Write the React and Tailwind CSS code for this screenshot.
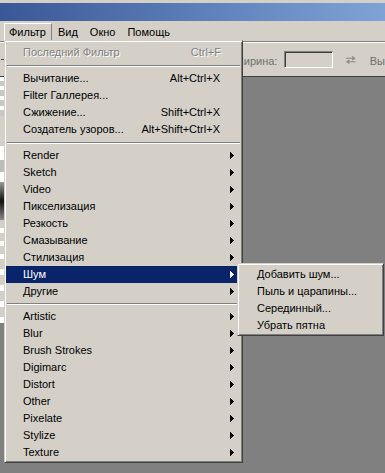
import React from 'react';

const topItems = [
  { label: 'Вычитание...', keys: 'Alt+Ctrl+X' },
  { label: 'Filter Галлерея...' },
  { label: 'Сжижение...', keys: 'Shift+Ctrl+X' },
  { label: 'Создатель узоров...', keys: 'Alt+Shift+Ctrl+X' },
];

const pluginItems = ['Render', 'Sketch', 'Video', 'Пикселизация', 'Резкость', 'Смазывание', 'Стилизация', 'Шум', 'Другие'];
const galleryItems = ['Artistic', 'Blur', 'Brush Strokes', 'Digimarc', 'Distort', 'Other', 'Pixelate', 'Stylize', 'Texture'];
const noiseItems = ['Добавить шум...', 'Пыль и царапины...', 'Серединный...', 'Убрать пятна'];

const Arrow = ({ white }) => (
  <svg width="4" height="7" viewBox="0 0 4 7" className="ml-auto mr-[7px]" shapeRendering="crispEdges">
    <path d="M0 0h1v1h1v1h1v1h1v1h-1v1h-1v1h-1v1h-1z" fill={white ? '#fff' : '#000'} />
  </svg>
);

const Separator = ({ h }) => (
  <div className={`flex items-center ${h}`}>
    <div className="mx-[1px] h-[2px] w-full border-t border-t-[#808080] border-b border-b-white" />
  </div>
);

const Row = ({ label, keys, sub, active }) => (
  <div className={`flex h-[17px] items-center pl-[17px] ${active ? 'bg-[#0a246a] text-white' : ''}`}>
    <span className="whitespace-nowrap">{label}</span>
    {keys && <span className="ml-auto mr-[21px] whitespace-nowrap">{keys}</span>}
    {sub && <Arrow white={active} />}
  </div>
);

const panel =
  'absolute border border-t-[#d4d0c8] border-l-[#d4d0c8] border-r-[#404040] border-b-[#404040] bg-[#d4d0c8] shadow-[inset_1px_1px_0_#fff,inset_-1px_-1px_0_#808080]';

export default function App() {
  return (
    <div className="relative flex h-[473px] w-[385px] flex-col overflow-hidden bg-[#808080] font-['Liberation_Sans',Arial,sans-serif] text-[11px] leading-none text-black select-none">
      {/* window title */}
      <div className="h-[3px] shrink-0 bg-[#d4d0c8]" />
      <div className="h-[18px] shrink-0 bg-[#3a5796] bg-[linear-gradient(to_right,#3a5796,#7fa3d7)]" />

      {/* menu bar */}
      <div className="flex h-[21px] shrink-0 items-start border-b border-b-[#808080] bg-[#d4d0c8] pl-[4px] pt-[2px]">
        <div className="flex h-[18px] items-center border-t border-l border-r border-t-white border-l-white border-r-[#808080] pl-[4px] pr-[5px]">
          Фильтр
        </div>
        <div className="flex h-[18px] items-center px-[6px]">Вид</div>
        <div className="flex h-[18px] items-center px-[6px]">Окно</div>
        <div className="flex h-[18px] items-center px-[6px]">Помощь</div>
      </div>

      {/* options bar */}
      <div className="flex h-[35px] shrink-0 items-center border-t border-t-white border-b border-b-[#404040] bg-[#d4d0c8]">
        <div className="ml-[1px] h-[1px] w-[3px] bg-[#404040]" />
        <span className="ml-[230px] pt-[3px] text-[#6f6f6f]">Ширина:</span>
        <div className="ml-[7px] h-[17px] w-[55px] border border-t-[#808080] border-l-[#808080] border-r-white border-b-white shadow-[inset_1px_1px_0_#404040]" />
        <svg width="13" height="10" viewBox="0 0 13 10" className="ml-[12px] opacity-70 blur-[0.4px]">
          <path d="M1 3h10M8 1l3 2-3 2" stroke="#6a6a6a" strokeWidth="1.2" fill="none" />
          <path d="M12 7H2M5 5L2 7l3 2" stroke="#6a6a6a" strokeWidth="1.2" fill="none" />
        </svg>
        <span className="ml-[13px] pt-[3px] text-[#6f6f6f]">Вы</span>
      </div>

      {/* workspace, left edge of the toolbox */}
      <div className="flex flex-1">
        <div className="flex w-[4px] flex-col">
          <div className="h-[4px] bg-white" />
          <div className="h-[5px] bg-[#c8c8c8]" />
          <div className="h-[4px] bg-white" />
          <div className="h-[6px] bg-[#c8c8c8]" />
          <div className="h-[4px] bg-white" />
          <div className="h-[6px] bg-[#c8c8c8]" />
          <div className="h-[4px] bg-white" />
          <div className="h-[6px] bg-[#c8c8c8]" />
          <div className="h-[30px] bg-[#d4d0c8]" />
          <div className="h-[14px] bg-white" />
          <div className="h-[12px] bg-[#bdbdbd]" />
          <div className="h-[10px] bg-white" />
          <div className="h-[38px] bg-[#333] bg-[linear-gradient(to_bottom,#9a9a9a,#111,#8a8a8a)]" />
          <div className="h-[8px] bg-[#d4d0c8]" />
          <div className="h-[5px] bg-white" />
          <div className="h-[8px] bg-[#d4d0c8]" />
          <div className="h-[5px] bg-white" />
          <div className="h-[8px] bg-[#d4d0c8]" />
          <div className="h-[5px] bg-white" />
          <div className="h-[10px] bg-[#d4d0c8]" />
          <div className="h-[6px] bg-white" />
          <div className="h-[10px] bg-[#d4d0c8]" />
          <div className="h-[6px] bg-white" />
          <div className="h-[10px] bg-[#d4d0c8]" />
          <div className="h-[6px] bg-white" />
          <div className="h-[10px] bg-[#d4d0c8]" />
          <div className="h-[6px] bg-white" />
        </div>
      </div>

      {/* Фильтр menu */}
      <div className={`${panel} left-[4px] top-[40px] w-[239px] px-[1px] pt-[3px] pb-[1px]`}>
        <div className="flex h-[17px] items-center pl-[17px] text-[#808080] [text-shadow:1px_1px_0_#fff]">
          <span>Последний Фильтр</span>
          <span className="ml-auto mr-[20px]">Ctrl+F</span>
        </div>
        <Separator h="h-[9px]" />
        {topItems.map((item) => (
          <Row key={item.label} label={item.label} keys={item.keys} />
        ))}
        <Separator h="h-[9px]" />
        {pluginItems.map((name) => (
          <Row key={name} label={name} sub active={name === 'Шум'} />
        ))}
        <Separator h="h-[8px]" />
        {galleryItems.map((name) => (
          <Row key={name} label={name} sub />
        ))}
      </div>

      {/* Шум submenu */}
      <div className={`${panel} left-[237px] top-[263px] w-[147px] px-[1px] pt-[2px] pb-[1px]`}>
        {noiseItems.map((name) => (
          <div key={name} className="flex h-[17px] items-center pl-[18px] whitespace-nowrap">
            {name}
          </div>
        ))}
      </div>
    </div>
  );
}
